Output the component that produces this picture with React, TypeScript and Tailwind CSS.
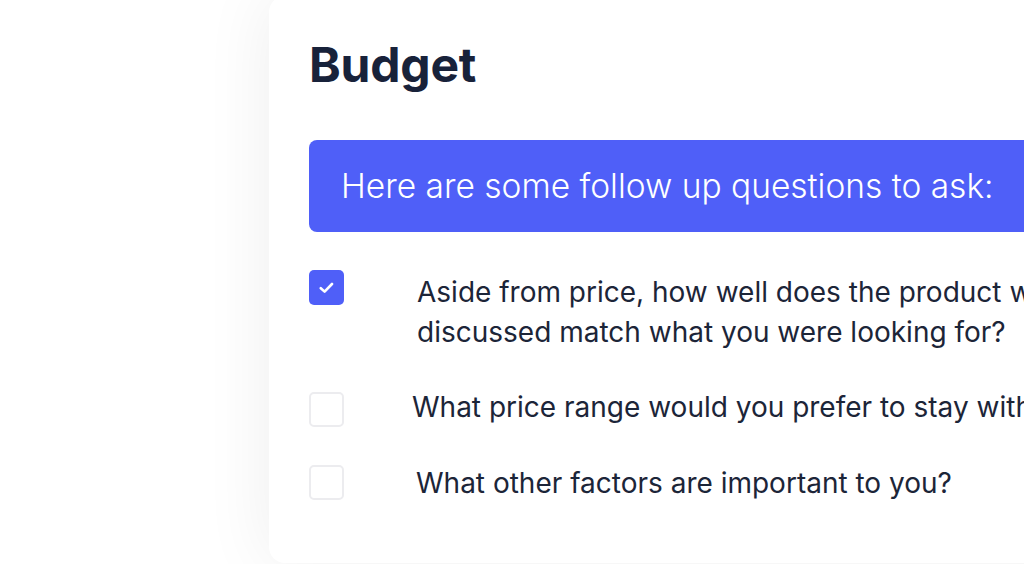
import React from "react";

const questions = [
	{
		text: "Aside from price, how well does the product we discussed match what you were looking for?",
		checked: true,
		rowClass: "mt-[38px]",
		textClass: "ml-[73px] mt-[2px]",
		boxClass: "mt-0",
	},
	{
		text: "What price range would you prefer to stay within?",
		checked: false,
		rowClass: "mt-[35px]",
		textClass: "ml-[68px] mt-0",
		boxClass: "mt-[5px]",
	},
	{
		text: "What other factors are important to you?",
		checked: false,
		rowClass: "mt-[36px]",
		textClass: "ml-[72px] mt-0",
		boxClass: "mt-[2px]",
	},
];

function CheckIcon() {
	return (
		<svg width="15" height="12" viewBox="0 0 15 12" fill="none">
			<path
				d="M1.8 6.2L5.6 9.6L13 2"
				stroke="white"
				strokeWidth="2.6"
				strokeLinecap="round"
				strokeLinejoin="round"
			/>
		</svg>
	);
}

export default function App() {
	return (
		<div className="w-[1024px] h-[564px] overflow-hidden bg-white font-['Inter',sans-serif]">
			<div className="ml-[269px] -mt-[4px] w-[820px] h-[567px] rounded-2xl bg-white shadow-[0_0_70px_rgba(0,0,0,0.07)] pl-[40px] pt-[45px]">
				<h1 className="text-[48px] leading-[48px] font-bold text-[#18223a] tracking-[-0.2px]">
					Budget
				</h1>
				<div className="mt-[51px] h-[92px] w-[760px] rounded-lg bg-[#4f5ff8] flex items-center pl-[32px]">
					<span className="text-[33.5px] font-light text-white whitespace-nowrap">
						Here are some follow up questions to ask:
					</span>
				</div>
				<div className="flex flex-col">
					{questions.map((q, i) => (
						<div key={i} className={`${q.rowClass} flex items-start`}>
							{q.checked ? (
								<div className="shrink-0 w-[35px] h-[35px] rounded-[5px] bg-[#4f5ff8] flex items-center justify-center">
									<CheckIcon />
								</div>
							) : (
								<div
									className={`${q.boxClass} shrink-0 w-[35px] h-[35px] rounded-[5px] border-2 border-[#ececef] bg-white`}
								/>
							)}
							<p
								className={`${q.textClass} w-[700px] text-[28px] leading-[40px] text-[#1c2538]`}
							>
								{q.text}
							</p>
						</div>
					))}
				</div>
			</div>
		</div>
	);
}
